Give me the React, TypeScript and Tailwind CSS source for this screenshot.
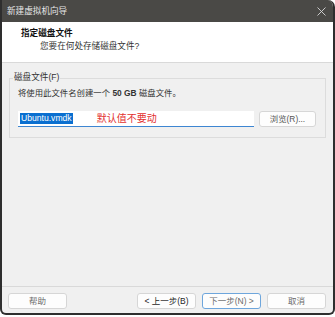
const font = "font-['Liberation_Sans','Noto_Sans_CJK_SC',sans-serif]";

function DialogButton({ label, primary, dark }: { label: string; primary?: boolean; dark?: boolean }) {
  return (
    <button
      type="button"
      className={`h-[16px] w-[59px] rounded-[3px] border bg-[#fdfdfd] text-[8.5px] leading-none ${
        primary ? 'border-[#6ea6dc]' : 'border-[#d6d6d6]'
      } ${dark ? 'text-[#1f1f1f]' : 'text-[#6a6a6a]'}`}
    >
      {label}
    </button>
  );
}

export default function App() {
  return (
    <div className={`h-[317px] w-[335px] bg-white ${font}`}>
      <div className="flex h-[315px] w-[335px] flex-col overflow-hidden rounded-tr-[7px] rounded-b-[6px] border-x-2 border-b-2 border-[#2e2e2e] bg-[#f0f0f0]">
        {/* title bar */}
        <div className="flex h-[22px] shrink-0 items-center justify-between bg-[#4a4946] pl-[5px] pr-[7px]">
          <span className="text-[8.6px] leading-none text-[#e6e6e6]">新建虚拟机向导</span>
          <svg width="9" height="9" viewBox="0 0 9 9">
            <path d="M0.5 0.5L8.5 8.5M8.5 0.5L0.5 8.5" stroke="#d8d8d8" strokeWidth="0.9" />
          </svg>
        </div>

        {/* header */}
        <div className="h-[41px] shrink-0 border-b border-[#d9d9d9] bg-white pl-[19px] pt-[5px] text-[8.6px] leading-[12px] text-[#111]">
          <div className="font-bold">指定磁盘文件</div>
          <div className="mt-[1px] pl-[19px] text-[#333]">您要在何处存储磁盘文件?</div>
        </div>

        {/* body */}
        <div className="flex-1 px-[7px] pt-[15px]">
          <div className="relative border border-[#dcdcdc] pb-[10px] pl-[8px] pr-[9px] pt-[8px]">
            <span className="absolute -top-[8px] left-[3px] bg-[#f0f0f0] px-[1px] text-[8.6px] leading-[12px] text-[#333]">
              磁盘文件(F)
            </span>
            <div className="text-[8.4px] leading-[12px] text-[#333]">
              将使用此文件名创建一个 <span className="font-bold">50 GB</span> 磁盘文件。
            </div>
            <div className="mt-[12px] flex h-[16px] items-stretch gap-[5px]">
              <div className="flex flex-1 items-center border-b-[1.5px] border-[#3d86d2] bg-white pl-[2px]">
                <span className="bg-[#0a6fd0] px-[1px] text-[8.6px] leading-[11px] text-white">Ubuntu.vmdk</span>
                <span className="ml-[24px] text-[10px] leading-none text-[#e3302f]">默认值不要动</span>
              </div>
              <button
                type="button"
                className="w-[57px] rounded-[3px] border border-[#d6d6d6] bg-[#fdfdfd] text-[8.4px] leading-none text-[#555]"
              >
                浏览(R)...
              </button>
            </div>
          </div>
        </div>

        {/* footer */}
        <div className="flex h-[27px] shrink-0 items-start border-t border-[#d9d9d9] pl-[6px] pr-[7px] pt-[6px]">
          <DialogButton label="帮助" />
          <div className="ml-auto flex gap-[6px]">
            <DialogButton label="< 上一步(B)" dark />
            <DialogButton label="下一步(N) >" primary />
            <DialogButton label="取消" />
          </div>
        </div>
      </div>
    </div>
  );
}
